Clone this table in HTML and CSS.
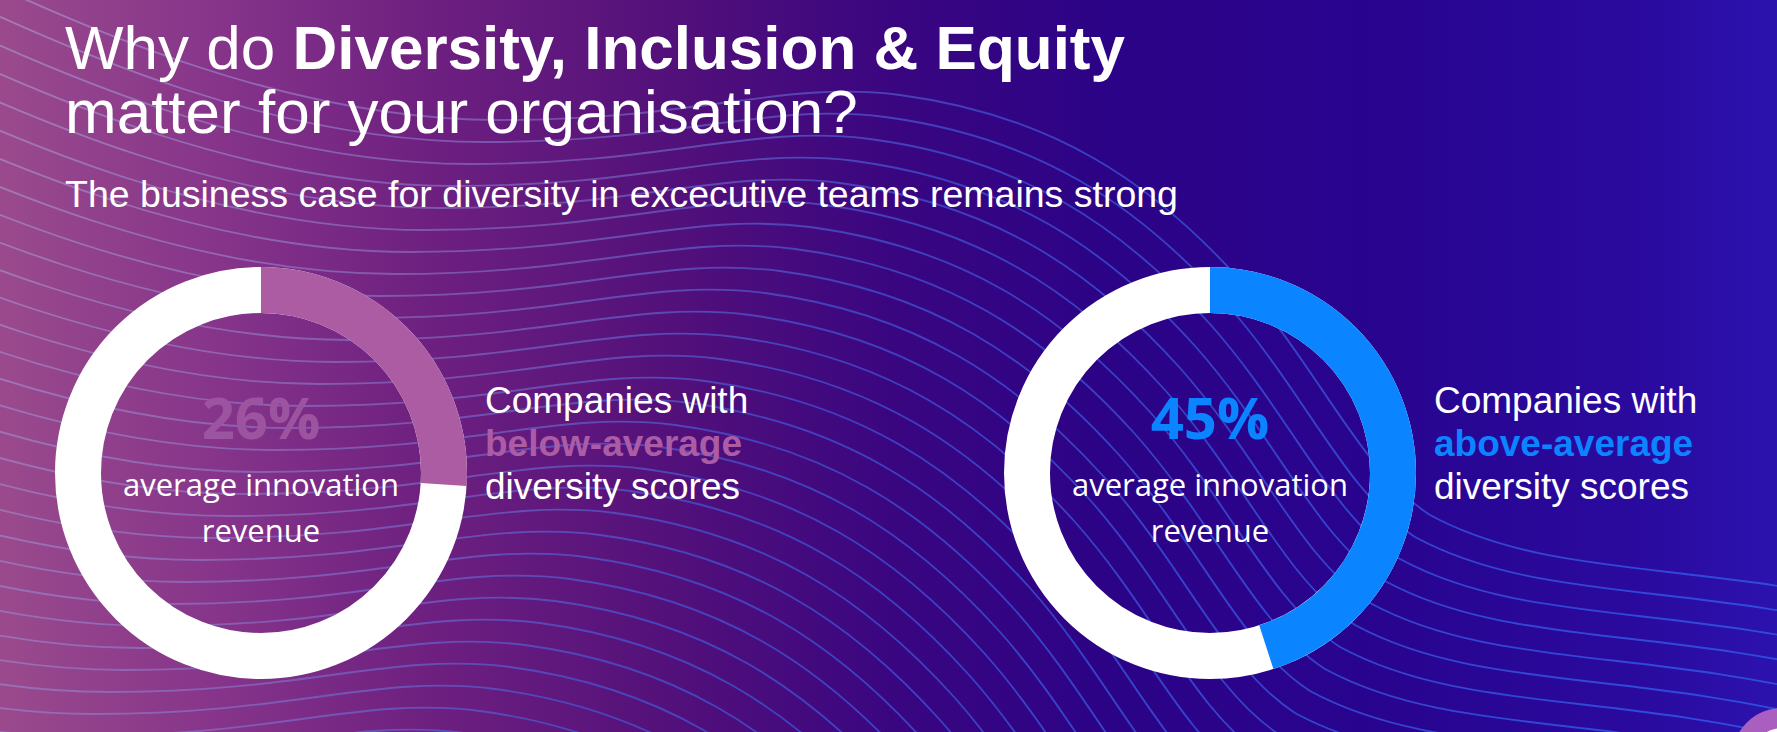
FILE: index.html
```html
<!DOCTYPE html>
<html lang="en">
<head>
<meta charset="utf-8">
<title>Why do Diversity, Inclusion &amp; Equity matter</title>
<link rel="stylesheet" href="styles.css">
</head>
<body>
<main class="slide">
  <svg class="waves" viewBox="0 0 1777 732" preserveAspectRatio="none" aria-hidden="true">
    <defs>
      <linearGradient id="waveStroke" gradientUnits="userSpaceOnUse" x1="0" y1="0" x2="1777" y2="0">
        <stop offset="0" stop-color="#b4ace2" stop-opacity="0.5"/>
        <stop offset="0.35" stop-color="#8a90e2" stop-opacity="0.45"/>
        <stop offset="0.55" stop-color="#4262e2" stop-opacity="0.62"/>
        <stop offset="1" stop-color="#2f5ae8" stop-opacity="0.8"/>
      </linearGradient>
      <path id="wave" d="M -100,-60 C 100,40 300,120 500,120 C 700,120 780,80 900,95 C 1050,115 1150,180 1240,280 C 1320,370 1360,470 1430,515 C 1550,580 1700,560 1900,610"/>
    </defs>
    <g class="wave-lines">
      <use href="#wave" transform="translate(0 0)"/>
      <use href="#wave" transform="translate(-15 22)"/>
      <use href="#wave" transform="translate(-30 44)"/>
      <use href="#wave" transform="translate(-45 66)"/>
      <use href="#wave" transform="translate(-60 88)"/>
      <use href="#wave" transform="translate(-75 110)"/>
      <use href="#wave" transform="translate(-90 132)"/>
      <use href="#wave" transform="translate(-105 154)"/>
      <use href="#wave" transform="translate(-120 176)"/>
      <use href="#wave" transform="translate(-135 198)"/>
      <use href="#wave" transform="translate(-150 220)"/>
      <use href="#wave" transform="translate(-165 242)"/>
      <use href="#wave" transform="translate(-180 264)"/>
      <use href="#wave" transform="translate(-195 286)"/>
      <use href="#wave" transform="translate(-210 308)"/>
      <use href="#wave" transform="translate(-225 330)"/>
      <use href="#wave" transform="translate(-240 352)"/>
      <use href="#wave" transform="translate(-255 374)"/>
      <use href="#wave" transform="translate(-270 396)"/>
      <use href="#wave" transform="translate(-285 418)"/>
      <use href="#wave" transform="translate(-300 440)"/>
      <use href="#wave" transform="translate(-315 462)"/>
      <use href="#wave" transform="translate(-330 484)"/>
      <use href="#wave" transform="translate(-345 506)"/>
      <use href="#wave" transform="translate(-360 528)"/>
      <use href="#wave" transform="translate(-375 550)"/>
      <use href="#wave" transform="translate(-390 572)"/>
      <use href="#wave" transform="translate(-405 594)"/>
      <use href="#wave" transform="translate(-420 616)"/>
      <use href="#wave" transform="translate(-435 638)"/>
      <use href="#wave" transform="translate(-450 660)"/>
      <use href="#wave" transform="translate(-465 682)"/>
      <use href="#wave" transform="translate(-480 704)"/>
      <use href="#wave" transform="translate(-495 726)"/>
      <use href="#wave" transform="translate(-510 748)"/>
    </g>
  </svg>

  <header class="intro">
    <h1 class="title">Why do <strong>Diversity, Inclusion &amp; Equity</strong><br>matter for your organisation?</h1>
    <p class="subtitle">The business case for diversity in excecutive teams remains strong</p>
  </header>

  <section class="stats">
    <div class="stat stat--below">
      <div class="donut">
        <svg class="donut-chart" viewBox="0 0 412 412" aria-hidden="true">
          <circle class="donut-track" cx="206" cy="206" r="183"/>
          <circle class="donut-value donut-value--below" cx="206" cy="206" r="183" stroke-dasharray="298.95 1149.8" transform="rotate(-90 206 206)"/>
        </svg>
        <div class="donut-label">
          <span class="pct pct--below">26%</span>
          <span class="label">average innovation<br>revenue</span>
        </div>
      </div>
      <p class="stat-text">Companies with<br><strong class="hl hl--below">below-average</strong><br>diversity scores</p>
    </div>

    <div class="stat stat--above">
      <div class="donut">
        <svg class="donut-chart" viewBox="0 0 412 412" aria-hidden="true">
          <circle class="donut-track" cx="206" cy="206" r="183"/>
          <circle class="donut-value donut-value--above" cx="206" cy="206" r="183" stroke-dasharray="517.41 1149.8" transform="rotate(-90 206 206)"/>
        </svg>
        <div class="donut-label">
          <span class="pct pct--above">45%</span>
          <span class="label">average innovation<br>revenue</span>
        </div>
      </div>
      <p class="stat-text">Companies with<br><strong class="hl hl--above">above-average</strong><br>diversity scores</p>
    </div>
  </section>

  <button class="chat-fab" type="button" aria-label="Chat"><span class="chat-fab-dot"></span></button>
</main>
</body>
</html>
```

FILE: styles.css
```css
html, body {
  margin: 0;
  padding: 0;
}

body {
  width: 1777px;
  height: 732px;
  overflow: hidden;
  background: #2a0690;
}

.slide {
  position: relative;
  width: 1777px;
  height: 732px;
  overflow: hidden;
  color: #ffffff;
  font-family: "Liberation Sans", Arial, sans-serif;
  background: linear-gradient(90deg,
    #9a4a8c 0%,
    #86358a 12%,
    #6e2080 24%,
    #52107a 38%,
    #3a0680 50%,
    #2c0386 62%,
    #28048f 78%,
    #2a0a9e 92%,
    #2c12ae 100%);
}

.waves {
  position: absolute;
  left: 0;
  top: 0;
  width: 1777px;
  height: 732px;
  z-index: 0;
}

.wave-lines {
  fill: none;
  stroke: url(#waveStroke);
  stroke-width: 1.8;
}

.intro {
  position: relative;
  z-index: 1;
  padding: 16px 0 0 65px;
}

.title {
  margin: 0;
  font-size: 62px;
  line-height: 64px;
  font-weight: 400;
}

.title strong {
  font-weight: 700;
}

.subtitle {
  margin: 29px 0 0;
  font-size: 37.5px;
  line-height: 42px;
  font-weight: 400;
}

.stats {
  position: relative;
  z-index: 1;
  display: flex;
  padding-left: 55px;
  margin-top: 52px;
}

.stat {
  display: flex;
  align-items: flex-start;
  gap: 18px;
}

.stat--below {
  width: 949px;
  flex: none;
}

.donut {
  display: grid;
  width: 412px;
  height: 412px;
  flex: none;
}

.donut > * {
  grid-area: 1 / 1;
}

.donut-chart {
  width: 412px;
  height: 412px;
  display: block;
}

.donut-track {
  fill: none;
  stroke: #ffffff;
  stroke-width: 46;
}

.donut-value {
  fill: none;
  stroke-width: 46;
  stroke-linecap: butt;
}

.donut-value--below {
  stroke: #ab5ca2;
}

.donut-value--above {
  stroke: #0a84ff;
}

.donut-label {
  display: flex;
  flex-direction: column;
  align-items: center;
  padding-top: 118px;
  font-family: "Open Sans", "Liberation Sans", sans-serif;
  text-align: center;
}

.pct {
  display: block;
  font-size: 58px;
  line-height: 64px;
  font-weight: 700;
}

.pct--below {
  color: #9d54a0;
}

.pct--above {
  color: #0a84ff;
}

.label {
  display: block;
  margin-top: 12px;
  font-size: 31px;
  line-height: 46px;
  font-weight: 400;
  color: #ffffff;
}

.stat-text {
  margin: 112px 0 0;
  font-size: 37px;
  line-height: 43px;
  font-weight: 400;
  white-space: nowrap;
}

.hl {
  font-weight: 700;
}

.hl--below {
  color: #ab5ca5;
}

.hl--above {
  color: #0a84ff;
}

.chat-fab {
  position: absolute;
  right: -55px;
  bottom: -76px;
  z-index: 2;
  width: 100px;
  height: 100px;
  padding: 0;
  border: none;
  border-radius: 50%;
  background: #aa5fc0;
  display: grid;
  place-items: center;
}

.chat-fab-dot {
  width: 60px;
  height: 60px;
  border-radius: 50%;
  background: #ffffff;
}
```
